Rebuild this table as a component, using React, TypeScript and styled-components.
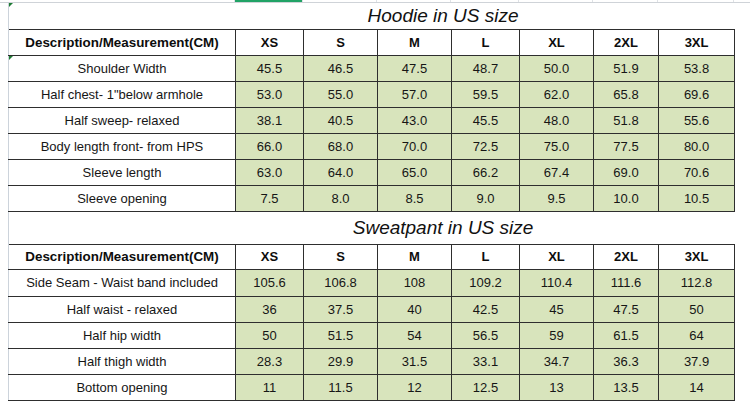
import styled, { createGlobalStyle } from 'styled-components';

const GlobalStyle = createGlobalStyle`
  html, body {
    margin: 0;
    padding: 0;
    background: #fff;
  }
  body {
    font-family: "Liberation Sans", Arial, sans-serif;
    color: #161616;
  }
`;

const widths = [227, 68, 74, 74, 68, 74, 65, 76];
const sizes = ['XS', 'S', 'M', 'L', 'XL', '2XL', '3XL'];

const hoodie = [
  { label: 'Shoulder Width', values: ['45.5', '46.5', '47.5', '48.7', '50.0', '51.9', '53.8'], flag: true },
  { label: 'Half chest- 1"below armhole', values: ['53.0', '55.0', '57.0', '59.5', '62.0', '65.8', '69.6'] },
  { label: 'Half sweep- relaxed', values: ['38.1', '40.5', '43.0', '45.5', '48.0', '51.8', '55.6'] },
  { label: 'Body length front- from HPS', values: ['66.0', '68.0', '70.0', '72.5', '75.0', '77.5', '80.0'] },
  { label: 'Sleeve length', values: ['63.0', '64.0', '65.0', '66.2', '67.4', '69.0', '70.6'] },
  { label: 'Sleeve opening', values: ['7.5', '8.0', '8.5', '9.0', '9.5', '10.0', '10.5'] },
];

const sweatpant = [
  { label: 'Side Seam - Waist band included', values: ['105.6', '106.8', '108', '109.2', '110.4', '111.6', '112.8'], h: 27 },
  { label: 'Half waist - relaxed', values: ['36', '37.5', '40', '42.5', '45', '47.5', '50'] },
  { label: 'Half hip width', values: ['50', '51.5', '54', '56.5', '59', '61.5', '64'] },
  { label: 'Half thigh width', values: ['28.3', '29.9', '31.5', '33.1', '34.7', '36.3', '37.9'] },
  { label: 'Bottom opening', values: ['11', '11.5', '12', '12.5', '13', '13.5', '14'] },
];

type Line = { label: string; values: string[]; flag?: boolean; h?: number };

const Section = ({ title, rows, titleH, headH, flagTitle }: { title: string; rows: Line[]; titleH: number; headH: number; flagTitle?: boolean }) => (
  <>
    <Row $h={titleH}>
      <TitleGap $flag={flagTitle} />
      <TitleCell colSpan={7}>{title}</TitleCell>
    </Row>
    <Row $h={headH}>
      <HeadCell $first>Description/Measurement(CM)</HeadCell>
      {sizes.map((s) => (
        <HeadCell key={s}>{s}</HeadCell>
      ))}
    </Row>
    {rows.map((r) => (
      <Row key={r.label} $h={r.h ?? 26}>
        <LabelCell $flag={r.flag}>{r.label}</LabelCell>
        {r.values.map((v, i) => (
          <ValueCell key={i}>{v}</ValueCell>
        ))}
      </Row>
    ))}
  </>
);

export default function App() {
  return (
    <Page>
      <GlobalStyle />
      <TopStrip>
        <Margin />
        {widths.map((w, i) => (
          <StripCol key={i} $w={w} $active={i === 1} />
        ))}
      </TopStrip>
      <Sheet>
        <colgroup>
          {widths.map((w, i) => (
            <col key={i} style={{ width: w }} />
          ))}
        </colgroup>
        <tbody>
          <Section title="Hoodie in US size" rows={hoodie} titleH={26} headH={26} flagTitle />
          <Section title="Sweatpant in US size" rows={sweatpant} titleH={33} headH={25} />
        </tbody>
      </Sheet>
    </Page>
  );
}

const Page = styled.div`
  width: 750px;
  height: 404px;
  overflow: hidden;
  background: #fff;
`;

const TopStrip = styled.div`
  display: flex;
  height: 2px;
  border-bottom: 1px solid #cfd3d8;
`;

const Margin = styled.div`
  width: 8px;
`;

const StripCol = styled.div<{ $w: number; $active?: boolean }>`
  width: ${(p) => p.$w}px;
  box-sizing: border-box;
  border-right: 1px solid #dfe2e6;
  background: ${(p) => (p.$active ? '#21a366' : 'transparent')};
`;

const Sheet = styled.table`
  margin-left: 8px;
  width: 726px;
  table-layout: fixed;
  border-collapse: collapse;
  border-spacing: 0;
  font-size: 13px;
`;

const Row = styled.tr<{ $h: number }>`
  height: ${(p) => p.$h}px;
`;

const Flag = `
  &::before {
    content: '';
    position: absolute;
    left: 0;
    top: 0;
    border-top: 4px solid #1e7b34;
    border-right: 4px solid transparent;
  }
`;

const TitleGap = styled.td<{ $flag?: boolean }>`
  padding: 0;
  border-left: 1px solid #ccd3db;
  position: relative;
  ${(p) => (p.$flag ? Flag : '')}
`;

const TitleCell = styled.td`
  padding: 1px 84px 0 0;
  text-align: center;
  font-style: italic;
  font-size: 19px;
  color: #111;
  vertical-align: middle;
`;

const HeadCell = styled.td<{ $first?: boolean }>`
  padding: 0;
  text-align: center;
  font-weight: bold;
  font-size: ${(p) => (p.$first ? '13.4px' : '13px')};
  color: #0d0d0d;
  background: #fff;
  border: 1px solid #2e2e2e;
  border-left: ${(p) => (p.$first ? '1px solid #ccd3db' : '1px solid #2e2e2e')};
  position: relative;
`;

const LabelCell = styled.td<{ $flag?: boolean }>`
  padding: 0;
  text-align: center;
  background: #fff;
  border: 1px solid #2e2e2e;
  border-left: 1px solid #ccd3db;
  white-space: nowrap;
  position: relative;
  ${(p) => (p.$flag ? Flag : '')}
`;

const ValueCell = styled.td`
  padding: 0;
  text-align: center;
  background: #d8e4bc;
  border: 1px solid #2e2e2e;
  white-space: nowrap;
`;
